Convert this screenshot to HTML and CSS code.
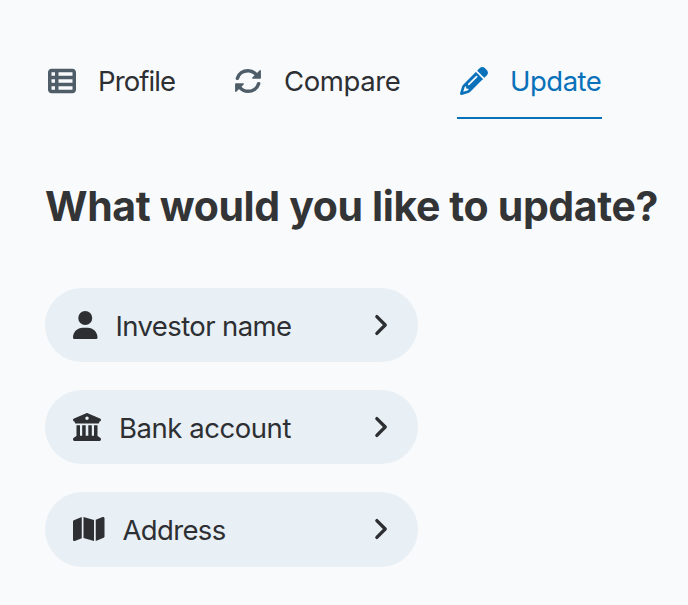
FILE: index.html
```html
<!DOCTYPE html>
<html lang="en">
<head>
<meta charset="utf-8">
<title>Update</title>
<link rel="stylesheet" href="styles.css">
</head>
<body>
<nav class="tabs">
  <a class="tab tab-profile">
    <svg class="tab-icon" viewBox="0 0 512 512"><path d="M0 96C0 60.7 28.7 32 64 32H448c35.3 0 64 28.7 64 64V416c0 35.3-28.7 64-64 64H64c-35.3 0-64-28.7-64-64V96zm64 0v64h64V96H64zm384 0H192v64H448V96zM64 224v64h64V224H64zm384 0H192v64H448V224zM64 352v64h64V352H64zm384 0H192v64H448V352z"/></svg>
    <span class="label">Profile</span>
  </a>
  <a class="tab tab-compare">
    <svg class="tab-icon" viewBox="0 0 28 28"><path d="M3.400 11.300C4.800 6.700 9 3.700 14 3.700c3.600 0 6.400 1.500 8.600 4.300M24.600 16.700c-1.400 4.600-5.600 7.600-10.600 7.600-3.600 0-6.400-1.500-8.600-4.300" fill="none" stroke="currentColor" stroke-width="3.500" stroke-linecap="round"/><path d="M26.200 3.700v7.400h-7.400zM1.800 24.300v-7.400h7.400z" stroke="currentColor" stroke-width="1.400" stroke-linejoin="round"/></svg>
    <span class="label">Compare</span>
  </a>
  <a class="tab tab-update active">
    <svg class="tab-icon" viewBox="0 0 512 512"><path d="M410.3 231l11.3-11.3-33.9-33.9-62.1-62.1L291.7 89.8l-11.3 11.3-22.6 22.6L58.6 322.9c-10.4 10.4-18 23.3-22.2 37.4L1 480.7c-2.5 8.4-.2 17.5 6.1 23.7s15.3 8.5 23.7 6.1l120.3-35.4c14.1-4.2 27-11.8 37.4-22.2L387.7 253.7 410.3 231zM160 399.4l-9.1 22.7c-4 3.1-8.5 5.4-13.3 6.9L59.4 452l23-78.1c1.4-4.9 3.8-9.4 6.9-13.3l22.7-9.1v32c0 8.8 7.2 16 16 16h32zM362.7 18.7L348.3 33.2 325.7 55.8 314.3 67.1l33.9 33.9 62.1 62.1 33.9 33.9 11.3-11.3 22.6-22.6 14.5-14.5c25-25 25-65.5 0-90.5L453.3 18.7c-25-25-65.5-25-90.5 0zm-47.400 168l-144 144c-6.200 6.200-16.400 6.200-22.600 0s-6.200-16.400 0-22.600l144-144c6.200-6.200 16.400-6.200 22.600 0s6.200 16.400 0 22.600z"/></svg>
    <span class="label">Update</span>
  </a>
</nav>
<h1 class="title">What would you like to update?</h1>
<div class="options">
  <button class="option">
    <svg class="icon-user" viewBox="0 0 448 512"><path d="M224 256A128 128 0 1 0 224 0a128 128 0 1 0 0 256zm-45.700 48C79.800 304 0 383.800 0 482.300C0 498.700 13.300 512 29.700 512H418.300c16.400 0 29.700-13.300 29.700-29.700C448 383.800 368.200 304 269.700 304H178.300z"/></svg>
    <span class="label option-name">Investor name</span>
    <svg class="chevron" viewBox="0 0 14 22"><path d="M2 2l9 9-9 9"/></svg>
  </button>
  <button class="option">
    <svg class="icon-bank" viewBox="0 0 512 512"><path d="M243.400 2.600l-224 96c-14 6-21.800 21-18.700 35.800S16.800 160 32 160v8c0 13.300 10.700 24 24 24H456c13.300 0 24-10.700 24-24v-8c15.200 0 28.300-10.700 31.300-25.600s-4.800-29.900-18.700-35.800l-224-96c-8-3.400-17.200-3.400-25.200 0zM128 224H64V420.300c-.6 .3-1.200 .7-1.800 1.100l-48 32c-11.700 7.800-17 22.400-12.900 35.900S17.900 512 32 512H480c14.100 0 26.500-9.200 30.600-22.700s-1.100-28.100-12.900-35.900l-48-32c-.6-.4-1.200-.7-1.800-1.100V224H384V416H344V224H280V416H232V224H168V416H128V224zM256 64a32 32 0 1 1 0 64 32 32 0 1 1 0-64z"/></svg>
    <span class="label option-bank">Bank account</span>
    <svg class="chevron" viewBox="0 0 14 22"><path d="M2 2l9 9-9 9"/></svg>
  </button>
  <button class="option">
    <svg class="icon-map" viewBox="0 0 576 512"><path d="M384 476.100L192 421.200V35.900L384 90.800V476.100zm32-1.200V88.400L543.100 37.500c15.800-6.300 32.900 5.300 32.900 22.300V394.600c0 9.800-6 18.600-15.100 22.300L416 474.800zM15.100 95.100L160 37.200V423.600L32.900 474.500C17.100 480.800 0 469.200 0 452.200V117.400c0-9.800 6-18.600 15.100-22.300z"/></svg>
    <span class="label option-address">Address</span>
    <svg class="chevron" viewBox="0 0 14 22"><path d="M2 2l9 9-9 9"/></svg>
  </button>
</div>
</body>
</html>
```
FILE: styles.css
```css
* { box-sizing: border-box; }
body {
  margin: 0;
  padding: 46px 0 0 45px;
  background: #f8fafc;
  color: #2d2f33;
  font-family: Inter, "Liberation Sans", sans-serif;
  font-size: 27.5px;
  font-weight: 400;
  overflow: hidden;
}
svg { display: block; flex: none; fill: currentColor; overflow: visible; }
.label { white-space: nowrap; }
.tabs { display: flex; gap: 56px; height: 73px; }
.tab {
  display: flex;
  align-items: center;
  padding: 0 0 1px 3px;
  border-bottom: 2px solid transparent;
}
.tab-icon { width: 28px; height: 28px; margin-right: 22px; color: #4f5d68; }
.tab-profile { width: 130px; letter-spacing: -0.9px; }
.tab-compare { width: 170px; letter-spacing: -0.4px; }
.tab-update { width: 145px; letter-spacing: -0.5px; }
.active, .active .tab-icon { color: #0871b9; }
.active { border-bottom-color: #0871b9; }
.title {
  margin: 61px 0 0;
  font-size: 41px;
  line-height: 52px;
  font-weight: 700;
  letter-spacing: -0.37px;
  white-space: nowrap;
  color: #333436;
}
.options { display: flex; flex-direction: column; gap: 28px; margin-top: 56px; }
.option {
  display: flex;
  align-items: center;
  width: 373px;
  height: 74.2px;
  padding: 0 30px 0 28px;
  border: 0;
  border-radius: 38px;
  background: #e8eff5;
  color: #2d2f33;
  font: inherit;
}
.option .label { padding-top: 2px; }
.icon-user { width: 24.5px; height: 28px; margin-right: 18px; }
.icon-bank { width: 28px; height: 28px; margin-right: 18px; }
.icon-map { width: 31.5px; height: 28px; margin-right: 18px; }
.option-name { letter-spacing: -0.6px; }
.option-bank { letter-spacing: -0.45px; }
.option-address { letter-spacing: -0.65px; }
.chevron { width: 13px; height: 22px; margin-left: auto; }
.chevron path { fill: none; stroke: currentColor; stroke-width: 3.600; stroke-linecap: round; stroke-linejoin: round; }
```
